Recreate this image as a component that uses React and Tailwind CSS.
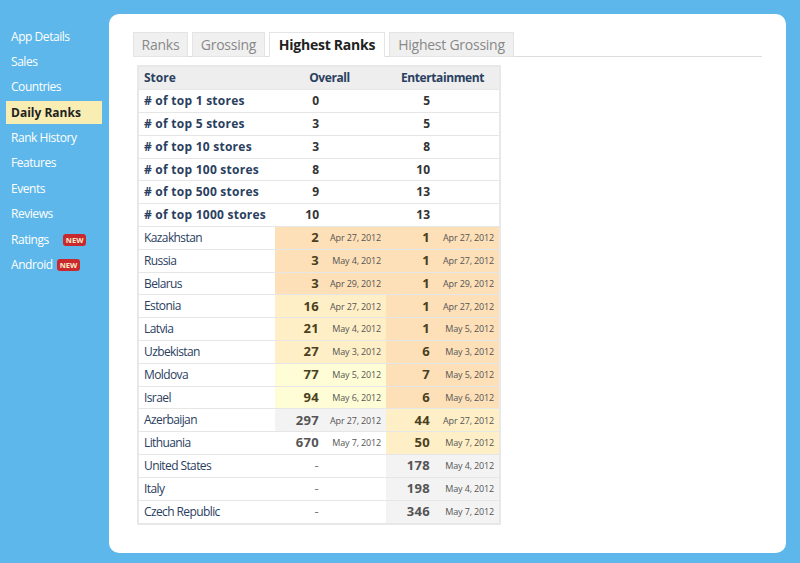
import React from "react";

const navItems = [
  { label: "App Details" },
  { label: "Sales" },
  { label: "Countries" },
  { label: "Daily Ranks", active: true },
  { label: "Rank History" },
  { label: "Features" },
  { label: "Events" },
  { label: "Reviews" },
  { label: "Ratings", badge: "ml-[14px]" },
  { label: "Android", badge: "ml-[4px]" }
];

const tabs = [
  { label: "Ranks", width: "w-[55px]" },
  { label: "Grossing", width: "w-[73px]" },
  { label: "Highest Ranks", width: "w-[116px]", active: true },
  { label: "Highest Grossing", width: "w-[125px]" }
];

const summary = [
  ["# of top 1 stores", "0", "5"],
  ["# of top 5 stores", "3", "5"],
  ["# of top 10 stores", "3", "8"],
  ["# of top 100 stores", "8", "10"],
  ["# of top 500 stores", "9", "13"],
  ["# of top 1000 stores", "10", "13"]
];

const heat = {
  a: "bg-[#fddfb8]",
  b: "bg-[#ffefc6]",
  c: "bg-[#fffdd6]",
  g: "bg-[#f3f3f3]",
  n: "bg-white"
};

const countries = [
  ["Kazakhstan", "2", "Apr 27, 2012", "a", "1", "Apr 27, 2012", "a"],
  ["Russia", "3", "May 4, 2012", "a", "1", "Apr 27, 2012", "a"],
  ["Belarus", "3", "Apr 29, 2012", "a", "1", "Apr 29, 2012", "a"],
  ["Estonia", "16", "Apr 27, 2012", "b", "1", "Apr 27, 2012", "a"],
  ["Latvia", "21", "May 4, 2012", "b", "1", "May 5, 2012", "a"],
  ["Uzbekistan", "27", "May 3, 2012", "b", "6", "May 3, 2012", "a"],
  ["Moldova", "77", "May 5, 2012", "c", "7", "May 5, 2012", "a"],
  ["Israel", "94", "May 6, 2012", "c", "6", "May 6, 2012", "a"],
  ["Azerbaijan", "297", "Apr 27, 2012", "g", "44", "Apr 27, 2012", "b"],
  ["Lithuania", "670", "May 7, 2012", "n", "50", "May 7, 2012", "b"],
  ["United States", "-", "", "n", "178", "May 4, 2012", "g"],
  ["Italy", "-", "", "n", "198", "May 4, 2012", "g"],
  ["Czech Republic", "-", "", "n", "346", "May 7, 2012", "g"]
];

function numColor(value, tone) {
  if (value === "-") return "text-[#777] font-normal text-[11px]";
  if (tone === "g" || tone === "n") return "text-[#555]";
  return "text-[#4a4020]";
}

function RankCells({ value, date, tone }) {
  return (
    <>
      <td className={`${heat[tone]} pr-[1px] text-right align-middle p-0 text-[13px] font-bold tracking-[0.3px] ${numColor(value, tone)}`}>{value}</td>
      <td className={`${heat[tone]} text-right align-middle p-0 pr-[5px] text-[9px] tracking-[-0.15px] text-[#555]`}>{date}</td>
    </>
  );
}

export default function App() {
  return (
    <div className="flex h-[563px] w-[800px] overflow-hidden bg-[#5db7ea] font-['Open_Sans',sans-serif]">
      <nav className="flex w-[109px] shrink-0 flex-col gap-[2.4px] pl-[6px] pr-[7px] pt-[25px]">
        {navItems.map((item) => (
          <div
            key={item.label}
            className={`flex h-[23px] items-center pl-[5px] ${item.active ? "bg-[#f8edb2] text-[12px] font-bold text-[#222]" : "text-[12px] tracking-[-0.45px] text-white"}`}
          >
            {item.label}
            {item.badge && (
              <span className={`${item.badge} rounded-[3px] bg-[#c9282d] px-[3px] text-[7.5px] font-bold leading-[12px] tracking-normal text-[#fbeecb]`}>NEW</span>
            )}
          </div>
        ))}
      </nav>

      <main className="mb-[10px] mt-[14px] w-[677px] rounded-[10px] bg-white pl-[24px] pr-[24px] pt-[18px]">
        <div className="flex gap-[4px] border-b border-[#ddd]">
          {tabs.map((tab) => (
            <div
              key={tab.label}
              className={`-mb-px flex h-[25px] items-center justify-center border text-[14px] tracking-[-0.25px] ${tab.width} ${
                tab.active
                  ? "border-[#e4e4e4] border-b-white bg-white font-bold text-[#222]"
                  : "border-[#e4e4e4] bg-[#f0f0f0] text-[#888]"
              }`}
            >
              {tab.label}
            </div>
          ))}
        </div>

        <div className="ml-[4px] mt-[8px] w-[364px] border-2 border-[#e8e8e8]">
          <table className="w-full table-fixed border-collapse text-[12px] text-[#2a4060]">
            <colgroup>
              <col className="w-[136px]" />
              <col className="w-[45px]" />
              <col className="w-[66px]" />
              <col className="w-[45px]" />
              <col className="w-[68px]" />
            </colgroup>
            <thead>
              <tr className="h-[22.8px] bg-[#eeeeee] font-bold tracking-[-0.4px]">
                <th className="p-0 pl-[5px] text-left tracking-normal">Store</th>
                <th colSpan="2" className="p-0 pr-[2px] text-center">Overall</th>
                <th colSpan="2" className="p-0 text-center">Entertainment</th>
              </tr>
            </thead>
            <tbody>
              {summary.map(([name, overall, category]) => (
                <tr key={name} className="h-[22.8px] border-t border-[#e6e6e6]">
                  <td className="p-0 pl-[5px] font-bold tracking-[0.25px]">{name}</td>
                  <td className="p-0 pr-[1px] text-right font-bold text-[#333]">{overall}</td>
                  <td className="p-0" />
                  <td className="p-0 pr-[1px] text-right font-bold text-[#333]">{category}</td>
                  <td className="p-0" />
                </tr>
              ))}
              {countries.map(([name, overall, overallDate, overallTone, category, categoryDate, categoryTone]) => (
                <tr key={name} className="h-[22.8px] border-t border-[#e6e6e6]">
                  <td className="p-0 pl-[5px] tracking-[-0.6px]">{name}</td>
                  <RankCells value={overall} date={overallDate} tone={overallTone} />
                  <RankCells value={category} date={categoryDate} tone={categoryTone} />
                </tr>
              ))}
            </tbody>
          </table>
        </div>
      </main>
    </div>
  );
}
